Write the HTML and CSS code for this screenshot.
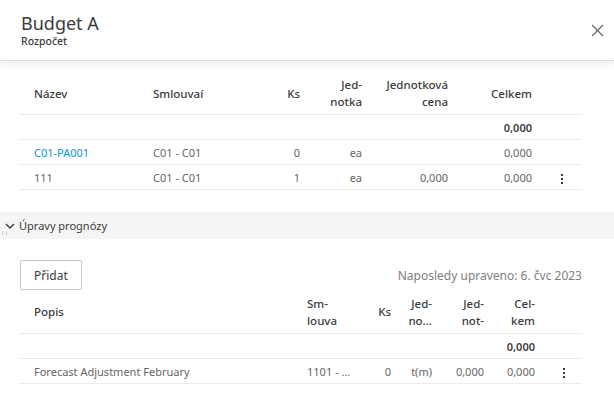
FILE: index.html
```html
<!DOCTYPE html>
<html lang="cs">
  <head>
    <meta charset="UTF-8" />
    <meta name="viewport" content="width=device-width, initial-scale=1.0" />
    <title>Budget A</title>
    <link rel="stylesheet" href="styles.css">
  </head>
  <body>
    <header class="panel-header">
      <div class="titles">
        <h1>Budget A</h1>
        <div class="subtitle">Rozpočet</div>
      </div>
      <button class="close-btn" aria-label="Zavřít">
        <svg width="13" height="13" viewBox="0 0 13 13"><path d="M1 1 L12 12 M12 1 L1 12" stroke="#666" stroke-width="1.2" fill="none"/></svg>
      </button>
    </header>

    <div class="section">
      <table class="grid budget">
        <colgroup>
          <col style="width:125px"><col style="width:115px"><col style="width:48px"><col style="width:62px"><col style="width:86px"><col style="width:84px"><col>
        </colgroup>
        <thead>
          <tr>
            <th class="first">Název</th>
            <th>Smlouvaí</th>
            <th class="num">Ks</th>
            <th class="num">Jed-<br>notka</th>
            <th class="num">Jednotková<br>cena</th>
            <th class="num">Celkem</th>
            <th></th>
          </tr>
        </thead>
        <tbody>
          <tr class="total">
            <td class="first"></td><td></td><td></td><td></td><td></td>
            <td class="num">0,000</td><td></td>
          </tr>
          <tr>
            <td class="first"><a href="#">C01-PA001</a></td>
            <td>C01 - C01</td>
            <td class="num">0</td>
            <td class="num">ea</td>
            <td class="num"></td>
            <td class="num">0,000</td>
            <td></td>
          </tr>
          <tr>
            <td class="first">111</td>
            <td>C01 - C01</td>
            <td class="num">1</td>
            <td class="num">ea</td>
            <td class="num">0,000</td>
            <td class="num">0,000</td>
            <td class="menu"><span class="kebab"><i></i><i></i><i></i></span></td>
          </tr>
        </tbody>
      </table>
    </div>

    <div class="group-bar">
      <span class="grip"></span>
      <svg class="chevron" width="10" height="6" viewBox="0 0 10 6"><path d="M1 1 L5 5 L9 1" stroke="#3c3c3c" stroke-width="1.3" fill="none"/></svg>
      <span>Úpravy prognózy</span>
    </div>

    <div class="section">
      <div class="toolbar">
        <button class="btn">Přidat</button>
        <span class="updated">Naposledy upraveno: 6. čvc 2023</span>
      </div>
      <table class="grid forecast">
        <colgroup>
          <col style="width:279px"><col style="width:51px"><col style="width:49px"><col style="width:41px"><col style="width:52px"><col style="width:51px"><col>
        </colgroup>
        <thead>
          <tr>
            <th class="first">Popis</th>
            <th>Sm-<br>louva</th>
            <th class="num">Ks</th>
            <th class="num">Jed-<br>no...</th>
            <th class="num">Jed-<br>not-</th>
            <th class="num">Cel-<br>kem</th>
            <th></th>
          </tr>
        </thead>
        <tbody>
          <tr class="total">
            <td class="first"></td><td></td><td></td><td></td><td></td>
            <td class="num">0,000</td><td></td>
          </tr>
          <tr>
            <td class="first">Forecast Adjustment February</td>
            <td class="clip">1101 - ...</td>
            <td class="num">0</td>
            <td class="num">t(m)</td>
            <td class="num">0,000</td>
            <td class="num">0,000</td>
            <td class="menu"><span class="kebab"><i></i><i></i><i></i></span></td>
          </tr>
        </tbody>
      </table>
    </div>
  </body>
</html>
```

FILE: styles.css
```css
body {
  margin: 0;
  font-family: "Noto Sans", "Open Sans", Arial, sans-serif;
  color: #3c3c3c;
  background: #fff;
  overflow: hidden;
}
.panel-header {
  height: 60px;
  display: flex;
  align-items: center;
  justify-content: space-between;
  padding: 0 10px 0 21px;
  border-bottom: 1px solid #dcdcdc;
  box-shadow: 0 3px 8px rgba(0, 0, 0, 0.08);
}
.titles h1 {
  margin: 0;
  font-size: 18px;
  font-weight: 400;
  line-height: 22px;
  color: #3c3c3c;
}
.subtitle {
  font-size: 10.5px;
  font-weight: 500;
  line-height: 14px;
  color: #3c3c3c;
}
.close-btn {
  border: none;
  background: none;
  padding: 0;
  cursor: pointer;
  display: flex;
}
.section {
  padding: 11px 32px 0 20px;
}
.grid {
  width: 100%;
  border-collapse: collapse;
  table-layout: fixed;
  font-size: 11px;
}
.grid th {
  font-size: 11.5px;
  font-weight: 500;
  text-align: left;
  line-height: 17px;
  padding: 4px 8px;
  height: 32px;
  border-bottom: 1px solid #ebebeb;
  color: #3c3c3c;
}
.grid td {
  height: 24px;
  padding: 0 8px;
  border-bottom: 1px solid #ebebeb;
  color: #666;
  white-space: nowrap;
  overflow: hidden;
}
.grid .first {
  padding-left: 14px;
}
.grid .num {
  text-align: right;
}
.grid .total td {
  font-weight: 600;
  color: #3c3c3c;
}
.grid a {
  color: #0696d7;
  text-decoration: none;
}
.grid .clip {
  text-overflow: clip;
}
.menu {
  text-align: center;
}
.kebab {
  display: inline-flex;
  flex-direction: column;
  gap: 2px;
  vertical-align: middle;
  margin-left: 2px;
}
.kebab i {
  width: 2px;
  height: 2px;
  background: #3c3c3c;
}
.group-bar {
  position: relative;
  margin-top: 22px;
  height: 27px;
  background: #f5f5f5;
  display: flex;
  align-items: center;
  font-size: 11px;
  color: #3c3c3c;
}
.chevron {
  margin: 0 4px 0 5px;
}
.grip {
  position: absolute;
  left: 2px;
  top: 19px;
  width: 3px;
  height: 4px;
  border-left: 1px solid #ccc;
  border-right: 1px solid #ccc;
}
.forecast th {
  height: 35px;
}
.toolbar {
  display: flex;
  align-items: center;
  justify-content: space-between;
  margin-top: 10px;
}
.btn {
  font-family: inherit;
  font-size: 12px;
  color: #3c3c3c;
  background: #fff;
  border: 1px solid #c8c8c8;
  border-radius: 2px;
  height: 30px;
  padding: 0 13px;
  cursor: pointer;
}
.updated {
  font-size: 12px;
  color: #808080;
}
```
